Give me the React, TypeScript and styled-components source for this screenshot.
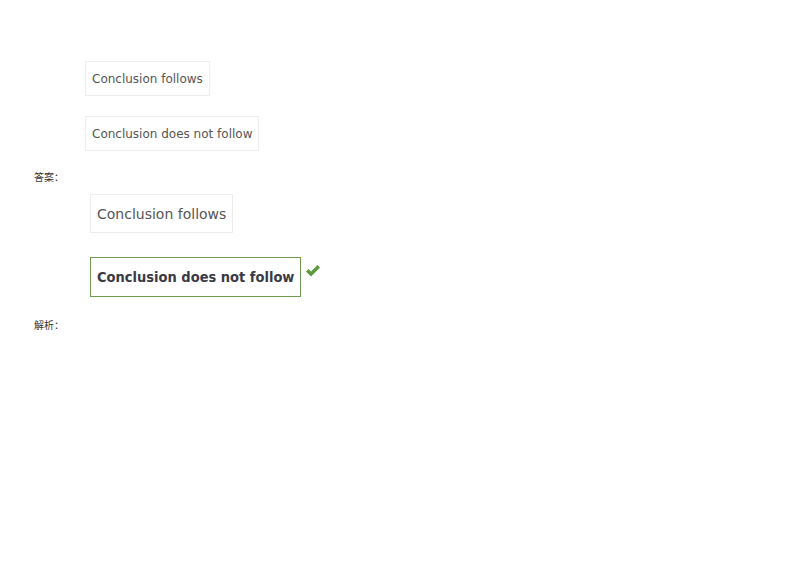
import React from "react";
import styled, { createGlobalStyle } from "styled-components";

const Global = createGlobalStyle`
  html, body { margin: 0; padding: 0; background: #fff; }
  body { font-family: "DejaVu Sans", Verdana, sans-serif; }
`;

const Page = styled.div`
  padding: 61px 0 0 34px;
`;

const OptionList = styled.div<{ $gap: number; $indent: number }>`
  display: flex;
  flex-direction: column;
  align-items: flex-start;
  gap: ${(p) => p.$gap}px;
  padding-left: ${(p) => p.$indent}px;
`;

const Option = styled.div<{ $large?: boolean; $correct?: boolean }>`
  box-sizing: border-box;
  display: flex;
  align-items: center;
  height: ${(p) => (p.$correct ? 40 : p.$large ? 39 : 35)}px;
  padding: 0 6px;
  border: 1px solid ${(p) => (p.$correct ? "#6f9a52" : "#eeeeee")};
  color: ${(p) => (p.$correct ? "#3a3a46" : "#555")};
  font-family: ${(p) =>
    p.$correct ? `"DejaVu Sans Condensed", "DejaVu Sans", sans-serif` : "inherit"};
  font-size: ${(p) => (p.$correct ? 14.5 : p.$large ? 14 : 12)}px;
  font-weight: ${(p) => (p.$correct ? 700 : 400)};
  white-space: nowrap;
`;

const Row = styled.div`
  display: flex;
  align-items: flex-start;
  gap: 4px;
`;

const Label = styled.div<{ $top: number }>`
  margin-top: ${(p) => p.$top}px;
  font-family: "Noto Sans CJK SC", sans-serif;
  font-size: 10px;
  line-height: 12px;
  color: #333;
`;

const Check = () => (
  <svg width="16" height="14" viewBox="0 0 16 14" style={{ marginTop: 7 }}>
    <path d="M1 7.5 L3.5 5 L6 7.5 L12.5 1 L15 3.5 L6 12.5 Z" fill="#5b9a3c" />
  </svg>
);

export default function App() {
  return (
    <>
      <Global />
      <Page>
        <OptionList $gap={20} $indent={51}>
          <Option>Conclusion follows</Option>
          <Option>Conclusion does not follow</Option>
        </OptionList>
        <Label $top={20}>答案：</Label>
        <OptionList $gap={24} $indent={56} style={{ marginTop: 11 }}>
          <Option $large>Conclusion follows</Option>
          <Row>
            <Option $large $correct>
              Conclusion does not follow
            </Option>
            <Check />
          </Row>
        </OptionList>
        <Label $top={22}>解析：</Label>
      </Page>
    </>
  );
}
